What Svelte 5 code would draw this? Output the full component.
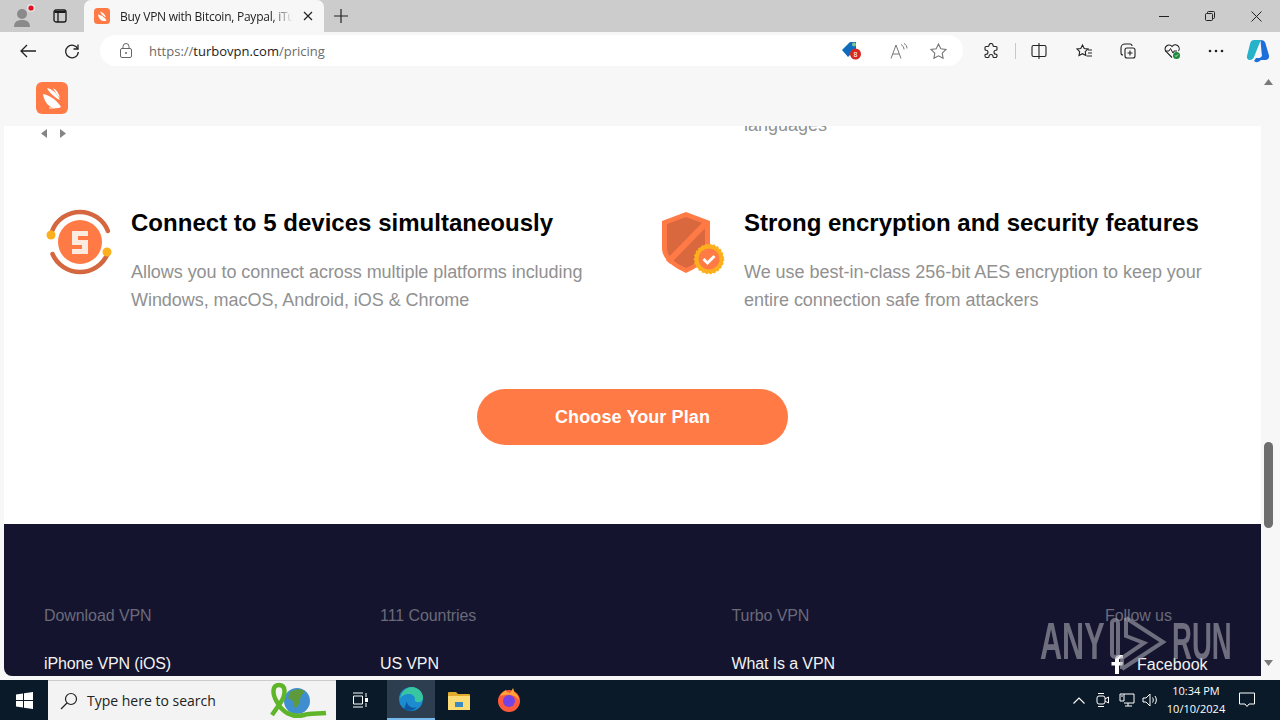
<script>
  const features = [
    { title: 'Connect to 5 devices simultaneously', text: ['Allows you to connect across multiple platforms including', 'Windows, macOS, Android, iOS & Chrome'], kind: 'five' },
    { title: 'Strong encryption and security features', text: ['We use best-in-class 256-bit AES encryption to keep your', 'entire connection safe from attackers'], kind: 'shield' }
  ];
  const columns = [
    { head: 'Download VPN', link: 'iPhone VPN (iOS)', w: 336 },
    { head: '111 Countries', link: 'US VPN', w: 351.5 },
    { head: 'Turbo VPN', link: 'What Is a VPN', w: 373.5 }
  ];
</script>

<div class="screen">
  <div class="tabstrip">
    <div class="profile">
      <svg width="24" height="24" viewBox="0 0 24 24"><circle cx="11" cy="10" r="5" fill="#8a8a8a"/><path d="M3 23c0-6 4-7 8-7s8 1 8 7z" fill="#8a8a8a"/><circle cx="20" cy="4" r="4" fill="#e4e4e4"/><circle cx="20" cy="4" r="2.6" fill="#e01020"/></svg>
    </div>
    <div class="tabicon">
      <svg width="16" height="16" viewBox="0 0 16 16" fill="none" stroke="#1a1a1a" stroke-width="1.3"><rect x="2" y="2" width="12" height="12" rx="2"/><path d="M6 5v9" /><path d="M2.5 3h11v2h-11z" fill="#1a1a1a" stroke="none"/></svg>
    </div>
    <div class="tab">
      <svg class="fav" width="16" height="16" viewBox="0 0 32 32"><rect width="32" height="32" rx="7" fill="#ff7a45"/><path d="M8 13c6 1 14 6 17 12-5 3-15 1-17-12z" fill="#fff"/><path d="M12 7c5 1 10 5 12 12-4-2-10-6-12-12z" fill="#fff"/></svg>
      <span class="tabtitle">Buy VPN with Bitcoin, Paypal, iTu</span>
      <svg width="10" height="10" viewBox="0 0 10 10" stroke="#222" stroke-width="1.2"><path d="M1 1l8 8M9 1l-8 8"/></svg>
    </div>
    <svg class="plus" width="14" height="14" viewBox="0 0 14 14" stroke="#222" stroke-width="1.200"><path d="M7 0v14M0 7h14"/></svg>
    <div class="winctl">
      <svg width="10" height="10" viewBox="0 0 10 10" stroke="#222"><path d="M0 5.500h10"/></svg>
      <svg width="10" height="10" viewBox="0 0 10 10" stroke="#222" fill="none"><rect x=".5" y="2.500" width="7" height="7" rx="1"/><path d="M2.500 2.500v-1a1 1 0 0 1 1-1h5a1 1 0 0 1 1 1v5a1 1 0 0 1-1 1h-1"/></svg>
      <svg width="11" height="11" viewBox="0 0 11 11" stroke="#222"><path d="M.5.500l10 10M10.500.500l-10 10"/></svg>
    </div>
  </div>

  <div class="toolbar">
    <svg class="back" width="16" height="14" viewBox="0 0 16 14" fill="none" stroke="#222" stroke-width="1.300"><path d="M16 7H1M7 1L1 7l6 6"/></svg>
    <svg class="reload" width="16" height="16" viewBox="0 0 16 16" fill="none" stroke="#222" stroke-width="1.300"><path d="M13.800 6A6.300 6.300 0 1 0 14.300 9"/><path d="M14 1.500V6H9.500"/></svg>
    <div class="omnibox">
      <svg class="lock" width="12" height="15" viewBox="0 0 12 15" fill="none" stroke="#666"><rect x=".5" y="5.500" width="11" height="9" rx="1.500"/><path d="M3 5.500V3.500a3 3 0 0 1 6 0v2"/><circle cx="6" cy="10" r="1" fill="#666" stroke="none"/></svg>
      <span class="url"><span class="dim">https://</span>turbovpn.com<span class="dim">/pricing</span></span>
      <svg class="coupon" width="22" height="20" viewBox="0 0 22 20"><path d="M1 9l8-8h6v7l-8 8z" fill="#0f6cbd"/><circle cx="13" cy="3.500" r="2" fill="#7cc98a"/><circle cx="14.500" cy="13" r="5.500" fill="#d8281f"/><text x="14.500" y="16" class="badge">8</text></svg>
      <svg class="readaloud" width="18" height="16" viewBox="0 0 18 16" fill="none" stroke="#777"><path d="M1 15.500L6 2l5 13.500M3 11h6"/><path d="M11 1.500c2 1 3 3 3 5M14 .5c2 1 3 3 3 5"/></svg>
      <svg class="star" width="17" height="16" viewBox="0 0 17 16" fill="none" stroke="#777" stroke-width="1.100"><path d="M8.500 1l2.300 4.800 5.200.7-3.800 3.600.9 5.200-4.600-2.500-4.600 2.500.9-5.200L1 6.500l5.200-.7z"/></svg>
    </div>
    <div class="tools">
      <svg width="16" height="16" viewBox="0 0 16 16" fill="none" stroke="#222" stroke-width="1.100"><path d="M6 2.500a2 2 0 0 1 4 0c0 .8.500 1 1.500 1H13a1 1 0 0 1 1 1v2c0 .6-.4.700-1 .700a2 2 0 0 0 0 4c.6 0 1 .2 1 .8V13a1.500 1.500 0 0 1-1.500 1.500H11c-.7 0-1-.4-1-1a2 2 0 0 0-4 0c0 .6-.3 1-1 1H3.500A1.500 1.500 0 0 1 2 13v-1c0-.6.400-.8 1-.8a2 2 0 0 0 0-4c-.6 0-1-.1-1-.7v-2a1 1 0 0 1 1-1h1.500c1 0 1.500-.2 1.500-1z"/></svg>
      <span class="sep"></span>
      <svg class="t2" width="16" height="16" viewBox="0 0 16 16" fill="none" stroke="#222" stroke-width="1.100"><rect x="1" y="2.500" width="14" height="11" rx="1.500"/><path d="M8 0v16"/></svg>
      <svg class="t3" width="17" height="16" viewBox="0 0 17 16" fill="none" stroke="#222" stroke-width="1.100"><path d="M6.500 2l1.700 3.500 3.800.5-2.800 2.700.7 3.800L6.500 10.700 3 12.500l.7-3.800L1 6l3.800-.5zM12 7h4M12 10h4M11 13h5"/></svg>
      <svg class="t4" width="16" height="16" viewBox="0 0 16 16" fill="none" stroke="#222" stroke-width="1.100"><rect x="5" y="5" width="10" height="10" rx="2"/><path d="M10 7.500v5M7.500 10h5"/><path d="M12 3a2 2 0 0 0-2-2H5a4 4 0 0 0-4 4v5a2 2 0 0 0 2 2"/></svg>
      <svg class="t5" width="17" height="16" viewBox="0 0 17 16"><path d="M8 14.500L2 8.500a3.800 3.800 0 0 1 6-5 3.800 3.800 0 0 1 6.500 4.500" fill="none" stroke="#222" stroke-width="1.100"/><path d="M1 8h4l1.500-2.500L9 10l1-2h3" fill="none" stroke="#222"/><circle cx="12.500" cy="12.500" r="3.500" fill="#1e8a3e"/><path d="M11 12.500l1 1 2-2" fill="none" stroke="#fff" stroke-width=".8"/></svg>
      <svg class="t6" width="16" height="4" viewBox="0 0 16 4" fill="#222"><circle cx="2" cy="2" r="1.300"/><circle cx="8" cy="2" r="1.300"/><circle cx="14" cy="2" r="1.300"/></svg>
      <svg class="t7" width="24" height="24" viewBox="0 0 24 24"><path d="M8 1h7l-1 2-6 15c-.5 1.500-2 3-4 3-2.500 0-3.500-2-3-4L4 5c.5-2.500 2-4 4-4z" fill="#26b3c9"/><path d="M14.500 1c2.500 0 4.500 1 5 3.500l3.500 12c.5 3-1.500 4.500-4 4.500h-4l-2 1.500c-2 1-4 .8-5-.5l2-3h3c1.500 0 2.500-1 3-2.500l-.5-3.500z" fill="#1e6fdc"/></svg>
    </div>
  </div>

  <div class="viewport">
    <div class="site">
      <header class="sitebar">
        <svg width="32" height="32" viewBox="0 0 32 32"><rect width="32" height="32" rx="6" fill="#ff7a45"/><path d="M7 12c6 1 14 6 18 13-5 3-16 1-18-13z" fill="#fff"/><path d="M11 6c5 1 10 5 13 12-4-2-10-6-13-12z" fill="#fff"/><path d="M17 6c4 2 6 6 7 10-3-3-5-6-7-10z" fill="#fff"/><path d="M13 26h6" stroke="#fff"/></svg>
      </header>

      <div class="topline">
        <div class="arrows">
          <svg width="7" height="9" viewBox="0 0 7 9" fill="#858585"><path d="M6 0v9L0 4.500z"/></svg>
          <svg width="7" height="9" viewBox="0 0 7 9" fill="#858585"><path d="M1 0v9l6-4.500z"/></svg>
        </div>
        <p class="clipped">languages</p>
      </div>

      <div class="features">
        {#each features as f}
          <section class="feature {f.kind}">
            <div class="ficon">
              {#if f.kind === 'five'}
                <svg width="68" height="68" viewBox="0 0 68 68">
                  <path d="M6.100 23A30 30 0 0 1 61.900 23" fill="none" stroke="#d4673f" stroke-width="4.500" stroke-linecap="round"/>
                  <path d="M61.500 46A30 30 0 0 1 6.500 46" fill="none" stroke="#d4673f" stroke-width="4.500" stroke-linecap="round"/>
                  <circle cx="34" cy="34" r="22" fill="#ff7a45"/>
                  <path d="M26 23h16v5H32v4h10v14H26v-5h10v-4H26z" fill="#fbeadf"/>
                  <circle cx="5" cy="27" r="4.500" fill="#fdb01e"/>
                  <circle cx="61" cy="44" r="4.500" fill="#fdb01e"/>
                </svg>
              {:else}
                <svg width="68" height="68" viewBox="0 0 68 68">
                  <path d="M25 4L49 13V40C49 52 36 60 25 65 14 60 1 52 1 40V13z" fill="#ff7a45"/>
                  <path d="M25 9L44 16V40C44 50 34 56 25 60 16 56 6 50 6 40V16z" fill="#d9683f"/>
                  <path d="M7 54L46 14" stroke="#ff7a45" stroke-width="6"/>
                  <circle cx="48" cy="51" r="14.500" fill="#fdb01e" stroke="#fdb01e" stroke-width="1.500" stroke-dasharray="2 2"/>
                  <circle cx="48" cy="51" r="10.500" fill="#ff7a45"/>
                  <path d="M42.500 51l4 4 7-7" fill="none" stroke="#fff" stroke-width="3"/>
                </svg>
              {/if}
            </div>
            <div class="fbody">
              <h3>{f.title}</h3>
              <p>{#each f.text as line}<span>{line}</span>{/each}</p>
            </div>
          </section>
        {/each}
      </div>

      <div class="cta"><button>Choose Your Plan</button></div>

      <footer class="sitefoot">
        {#each columns as c}
          <div class="fcol" style="width:{c.w}px">
            <div class="fhead">{c.head}</div>
            <div class="flink">{c.link}</div>
          </div>
        {/each}
        <div class="fcol">
          <div class="fhead">Follow us</div>
          <div class="flink social">
            <svg width="13" height="19" viewBox="0 0 13 19" fill="#fff"><path d="M4 19V10.500H.5V7H4V4.500C4 1.500 6 0 8.500 0H12v3.500H9.500C8.500 3.500 8 4 8 5v2h4l-.6 3.500H8V19z"/></svg>
            <span>Facebook</span>
          </div>
        </div>
      </footer>
    </div>

    <div class="scrollbar">
      <svg width="9" height="6" viewBox="0 0 9 6" fill="#7a7a7a"><path d="M4.500 0l4.500 6H0z"/></svg>
      <div class="track"><div class="thumb"></div></div>
      <svg width="9" height="6" viewBox="0 0 9 6" fill="#7a7a7a"><path d="M0 0h9L4.500 6z"/></svg>
    </div>

    <div class="anyrun">
      <span class="wm any"><span>ANY</span></span>
      <svg width="60" height="63" viewBox="0 0 60 63" fill="none" stroke="#a6a6b0" stroke-width="4"><rect x="4" y="8" width="6" height="37" rx="3"/><path d="M18 6L55 30 14 57M18 6V24L36 31 14 46V57"/></svg>
      <span class="wm run"><span>RUN</span></span>
    </div>
  </div>

  <div class="taskbar">
    <div class="start"><svg width="17" height="17" viewBox="0 0 17 17" fill="#fff"><path d="M0 2.500l7-1v6.500H0zM8 1.300L17 0v8H8zM0 9h7v6.500l-7-1zM8 9h9v8l-9-1.300z"/></svg></div>
    <div class="search">
      <svg width="18" height="18" viewBox="0 0 18 18" fill="none" stroke="#222" stroke-width="1.200"><circle cx="11" cy="7" r="5.500"/><path d="M7 11l-6 6"/></svg>
      <span>Type here to search</span>
      <svg class="ribbon" width="62" height="38" viewBox="0 0 62 38"><circle cx="29" cy="19" r="13" fill="#3f8fd0"/><path d="M22 10c5-3 10-4 15-1l-4 5-2 8-4 5-2-8-5-3z" fill="#5d9a3c"/><path d="M4 33L13 20C18 12 18 3 11 3 4 3 4 12 9 20 14 30 24 36 36 33 42 31 50 32 58 31" fill="none" stroke="#5fb52a" stroke-width="4.500"/></svg>
    </div>
    <div class="tb taskview"><svg width="16" height="16" viewBox="0 0 16 16" fill="none" stroke="#fff"><path d="M1 1h10M1 15h10M1.500 4h9v8h-9zM14 1v4M14 11v4"/><rect x="13" y="6" width="3" height="4" fill="#fff" stroke="none"/></svg></div>
    <div class="tb edge"><svg width="24" height="24" viewBox="0 0 24 24"><circle cx="12" cy="12" r="12" fill="#1c8bd0"/><path d="M1 12C2 4 8 0 13 0c6 0 11 5 11 11 0 3-3 5-6 4-2-.5-3-2-2-3 0-3-3-5-6-5-4 0-8 2-9 5z" fill="#37c6a0"/><path d="M8 14c0 5 5 8 10 6-3 4-9 5-13 2z" fill="#0c59a4"/></svg></div>
    <div class="tb"><svg width="22" height="20" viewBox="0 0 22 20"><path d="M0 3a1 1 0 0 1 1-1h7l2 2h11a1 1 0 0 1 1 1v14H0z" fill="#e3ab2c"/><rect y="6" width="22" height="14" fill="#fbdc74"/><rect x="7" y="12" width="8" height="5" fill="#3a8ac4"/></svg></div>
    <div class="tb fox"><svg width="24" height="24" viewBox="0 0 24 24"><circle cx="12" cy="13" r="11" fill="#ff5a3c"/><circle cx="12" cy="13" r="6" fill="#7542e5"/><path d="M3 8c2-3 4-5 6-6 0 2 2 3 4 3 1-1 2-3 3-5 1 2 1 3 1 4 3 2 5 5 5 8-3-4-8-7-19-4z" fill="#ffa436"/></svg></div>
    <div class="tray">
      <svg width="12" height="7" viewBox="0 0 12 7" fill="none" stroke="#fff" stroke-width="1.100"><path d="M.5 6.500L6 1l5.500 5.500"/></svg>
      <svg class="cam" width="13" height="16" viewBox="0 0 13 16" fill="none" stroke="#fff"><rect x="1" y="4" width="8" height="8" rx="2"/><path d="M9 7l3.500-2v6L9 9M2 1.500h6M2 14.500h6"/></svg>
      <svg class="net" width="16" height="14" viewBox="0 0 16 14" fill="none" stroke="#fff"><path d="M5 1h10v9H5M1 1h4v7H1zM9 10v3M6 13h7M2 3h2"/></svg>
      <svg class="vol" width="17" height="14" viewBox="0 0 17 14" fill="none" stroke="#fff"><path d="M1 5h3l4-4v12L4 9H1zM10.500 4.500c1 1.500 1 3.500 0 5M13 3c1.800 2.500 1.800 5.500 0 8"/></svg>
      <div class="clock"><span>10:34 PM</span><span>10/10/2024</span></div>
      <svg class="note" width="16" height="16" viewBox="0 0 16 16" fill="none" stroke="#fff"><path d="M.5 1h15v11H10l-2 2.500L6 12H.5z"/></svg>
    </div>
  </div>
</div>

<style>
  :global(body) { margin: 0; background: #ccc; }
  .screen { width: 1280px; height: 720px; overflow: hidden; display: flex; flex-direction: column; font-family: "Open Sans", sans-serif; background: #f7f7f7; }

  .tabstrip { height: 32px; background: #cccccc; display: flex; align-items: center; flex: none; }
  .profile { width: 24px; height: 24px; margin-left: 11px; flex: none; }
  .profile svg { display: block; }
  .tabicon { width: 16px; height: 16px; margin-left: 17px; flex: none; }
  .tabicon svg { display: block; }
  .tab { width: 240px; height: 32px; margin-left: 16px; background: #f7f7f7; border-radius: 7px 7px 0 0; display: flex; align-items: center; box-sizing: border-box; padding: 0 11px 0 10px; flex: none; }
  .tab .fav { flex: none; }
  .tabtitle { margin-left: 10px; margin-right: 10px; font-size: 12px; letter-spacing: -.25px; color: #222; flex: 1; white-space: nowrap; overflow: hidden; -webkit-mask-image: linear-gradient(90deg, #000 88%, transparent); mask-image: linear-gradient(90deg, #000 88%, transparent); }
  .plus { margin-left: 10px; }
  .winctl { margin-left: auto; display: flex; gap: 36px; align-items: center; padding-right: 18px; }

  .toolbar { height: 38px; background: #f7f7f7; display: flex; align-items: center; flex: none; box-sizing: border-box; padding-bottom: 1px; }
  .back { margin-left: 20px; }
  .reload { margin-left: 28px; }
  .omnibox { margin-left: 20px; width: 863px; height: 31px; background: #fff; border-radius: 16px; display: flex; align-items: center; flex: none; box-sizing: border-box; }
  .lock { margin-left: 20px; }
  .url { margin-left: 17px; font-size: 13px; color: #1c1c1c; white-space: nowrap; }
  .url .dim { color: #6b6b6b; }
  .coupon { margin-left: auto; }
  .badge { font: 7px "Liberation Sans", sans-serif; fill: #fff; text-anchor: middle; }
  .readaloud { margin-left: 27px; }
  .star { margin-left: 22px; margin-right: 16px; }
  .tools { display: flex; align-items: center; margin-left: 20px; }
  .sep { width: 1px; height: 16px; background: #c8c8c8; margin-left: 16px; }
  .t2 { margin-left: 15px; }
  .t3 { margin-left: 29px; }
  .t4 { margin-left: 27px; }
  .t5 { margin-left: 28px; }
  .t6 { margin-left: 27px; }
  .t7 { margin-left: 22px; }

  .viewport { position: relative; height: 606px; margin: 0 0 0 4px; width: 1272px; display: flex; flex: none; overflow: hidden; background: #fff; border-radius: 8px; }
  .site { width: 1257px; position: relative; overflow: hidden; flex: none; font-family: "Liberation Sans", sans-serif; height: 606px; }
  .sitebar { position: absolute; left: 0; top: 0; right: 0; height: 56px; background: #f7f7f7; display: flex; align-items: center; padding-left: 32px; box-sizing: border-box; z-index: 2; }
  .sitebar svg { display: block; margin-top: -1px; }

  .topline { display: grid; grid-template-columns: 740px auto; height: 69px; align-items: end; }
  .arrows { display: flex; gap: 11px; padding: 0 0 1px 37px; }
  .arrows svg { display: block; }
  .clipped { margin: 0; font-size: 18px; line-height: 28px; color: #919191; }

  .features { display: flex; margin-top: 70px; }
  .feature { display: flex; flex: none; }
  .five { width: 613px; padding-left: 42px; box-sizing: border-box; }
  .shield { padding-left: 44px; }
  .ficon { width: 68px; height: 68px; flex: none; margin-top: -1px; }
  .ficon svg { display: block; }
  .five .fbody { margin-left: 17px; }
  .shield .fbody { margin-left: 15px; }
  h3 { margin: 0; font-size: 24px; line-height: 28px; font-weight: 700; color: #000; white-space: nowrap; }
  .five h3 { letter-spacing: .02px; }
  .fbody p { margin: 21px 0 0; font-size: 18px; line-height: 28px; color: #919191; }
  .five p { letter-spacing: -.05px; }
  .shield p { letter-spacing: -.02px; }
  .fbody p span { display: block; white-space: nowrap; }

  .cta { display: flex; justify-content: flex-start; padding: 75px 0 0 473px; }
  button { width: 311px; height: 56px; border: 0; border-radius: 28px; background: #ff7a45; color: #fff; font: 700 18px "Liberation Sans", sans-serif; letter-spacing: .1px; }

  .sitefoot { margin-top: 79px; height: 152px; background: #14142e; display: flex; padding: 83px 0 0 40px; box-sizing: border-box; color: #fff; }
  .fcol { flex: none; }
  .fhead { font-size: 16px; line-height: 18px; color: #6a6a7a; letter-spacing: -.08px; }
  .flink { font-size: 16px; line-height: 18px; margin-top: 30px; color: #f2f2f2; white-space: nowrap; letter-spacing: -.12px; }
  .social { display: flex; align-items: center; gap: 13px; margin-left: 6px; letter-spacing: .05px; }
  .social svg { display: block; }

  .scrollbar { width: 15px; flex: none; display: flex; flex-direction: column; align-items: center; background: #f7f7f7; padding: 9px 0 10px; box-sizing: border-box; }
  .track { flex: 1; width: 100%; position: relative; }
  .thumb { position: absolute; left: 3px; top: 357px; width: 9px; height: 86px; background: #6e6e6e; border-radius: 5px; }

  .anyrun { position: absolute; left: 1036px; top: 542px; display: flex; opacity: .62; z-index: 3; pointer-events: none; }
  .wm { display: block; font: 700 51px/51px "Liberation Sans", sans-serif; color: #a6a6b0; margin-top: 4px; white-space: nowrap; }
  .wm span { display: inline-block; transform-origin: left top; }
  .any { width: 68px; }
  .any span { transform: scaleX(.6); }
  .run { width: 58px; margin-left: 4px; }
  .run span { transform: scaleX(.54); }

  .taskbar { position: relative; height: 40px; margin-top: 4px; background: #0b1a28; display: flex; align-items: center; flex: none; }
  .start { width: 48px; height: 40px; display: flex; align-items: center; justify-content: center; flex: none; }
  .search { width: 288px; height: 40px; background: #f3f3f3; border-top: 1px solid #ccc; box-sizing: border-box; display: flex; align-items: center; padding-left: 12px; font-size: 14px; color: #222; flex: none; }
  .search span { margin-left: 9px; }
  .ribbon { margin-left: auto; margin-right: 6px; }
  .tb { width: 48px; height: 40px; display: flex; align-items: center; justify-content: center; flex: none; box-sizing: border-box; }
  .taskview { margin-right: 3px; }
  .edge { background: #2c3e50; border-bottom: 2px solid #76b9ed; }
  .fox { margin-left: 2px; }
  .tray { margin-left: auto; display: flex; align-items: center; color: #fff; padding-right: 25px; }
  .cam { margin-left: 11.500px; }
  .net { margin-left: 9.500px; }
  .vol { margin-left: 7.500px; }
  .clock { display: flex; flex-direction: column; align-items: center; font-size: 11px; line-height: 18px; margin-left: 3px; width: 68px; }
  .note { margin-left: 9px; }
</style>
